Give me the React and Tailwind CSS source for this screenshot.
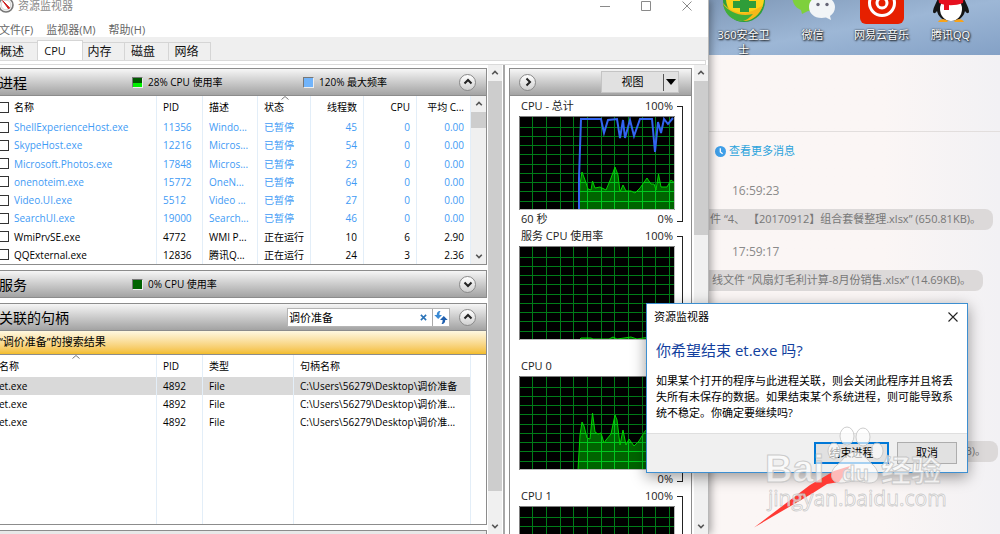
import React from "react";

const PROCESSES = [
  ["ShellExperienceHost.exe", "11356", "Windo...", "已暂停", "45", "0", "0.00"],
  ["SkypeHost.exe", "12216", "Micros...", "已暂停", "54", "0", "0.00"],
  ["Microsoft.Photos.exe", "17848", "Micros...", "已暂停", "29", "0", "0.00"],
  ["onenoteim.exe", "15772", "OneN...", "已暂停", "64", "0", "0.00"],
  ["Video.UI.exe", "5512", "Video ...", "已暂停", "27", "0", "0.00"],
  ["SearchUI.exe", "19000", "Search...", "已暂停", "46", "0", "0.00"],
  ["WmiPrvSE.exe", "4772", "WMI P...", "正在运行", "10", "6", "2.90"],
  ["QQExternal.exe", "12836", "腾讯Q...", "正在运行", "24", "3", "2.36"],
];

const HANDLES = [
  ["et.exe", "4892", "File", "C:\\Users\\56279\\Desktop\\调价准备"],
  ["et.exe", "4892", "File", "C:\\Users\\56279\\Desktop\\调价准..."],
  ["et.exe", "4892", "File", "C:\\Users\\56279\\Desktop\\调价准..."],
];

const GREEN_TOTAL =
  "60,94 61,68 63,56 66,64 69,73 72,74 73.5,65 76,72 81,71 87,74 90,67 92,62 96,51 99,59 101,76 104,69 107,75 112,75 116,77 121,72 128,62 132,68 135,68 137,74 139.5,58 142,71 148,71 152,64 156,67";
const BLUE_TOTAL =
  "60,94 60,62 62,3 82,3 85,17 89,4 98,3 101,22 104,4 106,22 111,4 115,20 121,3 133,3 136,36 139,6 142,17 145,3 149,8 154,2";
const GREEN_CPU0 =
  "59,94 61,59 63,46 65,50 68,62 71,63 73.5,37 76,56 79,58 82,57 85,67 87,64 92,58 96,39 98,44 101,69 104,54 107,69 110,63 115,70 120,65 126,55 134,50 142,56 148,52 156,60";
const GREEN_SERVICE = "60,94 62,92 72,92 74,93 90,93 94,91 98,93 112,91 118,93 130,91 156,93";

function Chevron({ dir, className }) {
  const d = { up: "M1.5 6.5 5 3l3.5 3.5", down: "M1.5 3.5 5 7l3.5-3.5", right: "M3.5 1.5 7 5 3.5 8.5" }[dir];
  return (
    <svg viewBox="0 0 10 10" className={className} fill="none" stroke="currentColor" strokeWidth="2" aria-hidden="true">
      <path d={d} />
    </svg>
  );
}

function RoundButton({ dir, label }) {
  return (
    <button
      type="button"
      aria-label={label}
      className="flex size-[17px] shrink-0 items-center justify-center rounded-full border border-[#8a8a8a] bg-gradient-to-b from-white to-[#d0d0d0] text-[#222]"
    >
      <Chevron dir={dir} className="size-[10px]" />
    </button>
  );
}

function ScrollBar({ thumb, className }) {
  return (
    <div className={"flex flex-col items-center bg-[#f0f0f0] text-[#555] " + className}>
      <Chevron dir="up" className="my-1 size-[8px] shrink-0" />
      <div className={"w-full bg-[#cdcdcd] " + thumb} />
      <Chevron dir="down" className="mt-auto mb-1 size-[8px] shrink-0" />
    </div>
  );
}

function Header({ title, children }) {
  return (
    <div className="flex h-[28px] shrink-0 items-center border-y border-[#8c8c8c] bg-gradient-to-b from-[#f6f6f6] to-[#a3a3a3] pr-[10px] pl-[3px]">
      <h2 className="w-[133px] shrink-0 text-[14px] whitespace-nowrap">{title}</h2>
      {children}
    </div>
  );
}

function Meter({ kind }) {
  const fill = {
    busy: "bg-gradient-to-b from-[#005a00] from-50% to-[#00f000] to-60%",
    idle: "bg-[#006400]",
    freq: "bg-[#71b4fb]",
  }[kind];
  return <span className={"size-[11px] shrink-0 border border-t-[#777] border-l-[#777] border-r-[#eee] border-b-[#eee] " + fill} />;
}

function ProcessTable() {
  const cell = "truncate border-r border-[#e3eef8] px-[6px] py-0 font-normal";
  const checkbox = "-ml-1 size-[11px] shrink-0 appearance-none border border-[#333] bg-white";
  return (
    <table className="h-[168px] w-full min-w-0 table-fixed border-collapse text-[10px] leading-4">
      <colgroup>
        <col />
        <col className="w-[46px]" />
        <col className="w-[55px]" />
        <col className="w-[53px]" />
        <col className="w-[53px]" />
        <col className="w-[53px]" />
        <col className="w-[54px]" />
      </colgroup>
      <thead>
        <tr className="h-[22px] text-left">
          <th className={cell}>
            <label className="flex items-center gap-[5px]">
              <input type="checkbox" className={checkbox} />
              名称
            </label>
          </th>
          <th className={cell}>PID</th>
          <th className={cell}>描述</th>
          <th className={cell + " relative"}>
            状态
            <svg viewBox="0 0 8 4" className="absolute top-0 left-[23px] h-1 w-2" fill="none" stroke="#777" aria-hidden="true">
              <path d="M0.5 3.5 4 .5l3.5 3" />
            </svg>
          </th>
          <th className={cell + " text-right"}>线程数</th>
          <th className={cell + " text-right"}>CPU</th>
          <th className={cell + " text-right"}>平均 C...</th>
        </tr>
      </thead>
      <tbody>
        {PROCESSES.map((p) => (
          <tr key={p[0]} className={p[3] === "已暂停" ? "text-[#3f9bf5]" : "text-black"}>
            <td className={cell}>
              <label className="flex items-center gap-[5px]">
                <input type="checkbox" className={checkbox} />
                {p[0]}
              </label>
            </td>
            <td className={cell}>{p[1]}</td>
            <td className={cell}>{p[2]}</td>
            <td className={cell}>{p[3]}</td>
            <td className={cell + " text-right"}>{p[4]}</td>
            <td className={cell + " text-right"}>{p[5]}</td>
            <td className={cell + " text-right"}>{p[6]}</td>
          </tr>
        ))}
      </tbody>
    </table>
  );
}

function HandleTable() {
  const cell = "truncate border-r border-[#e3eef8] px-[6px] py-0 font-normal";
  return (
    <table className="h-full w-full min-w-0 table-fixed border-collapse text-[10px] leading-4">
      <colgroup>
        <col />
        <col className="w-[46px]" />
        <col className="w-[91px]" />
        <col className="w-[177px]" />
      </colgroup>
      <thead>
        <tr className="h-[22px] text-left">
          <th className={cell + " relative !pl-[3px]"}>
            名称
            <svg viewBox="0 0 8 4" className="absolute top-0 left-[76px] h-1 w-2" fill="none" stroke="#777" aria-hidden="true">
              <path d="M0.5 3.5 4 .5l3.5 3" />
            </svg>
          </th>
          <th className={cell}>PID</th>
          <th className={cell}>类型</th>
          <th className={cell}>句柄名称</th>
        </tr>
      </thead>
      <tbody>
        {HANDLES.map((h, i) => (
          <tr key={i} className={i === 0 ? "h-[18px] bg-[#d9d9d9]" : "h-[18px]"}>
            <td className={cell + " !pl-[3px]"}>{h[0]}</td>
            <td className={cell}>{h[1]}</td>
            <td className={cell}>{h[2]}</td>
            <td className={cell}>{h[3]}</td>
          </tr>
        ))}
        <tr>
          <td className={cell} />
          <td className={cell} />
          <td className={cell} />
          <td className={cell} />
        </tr>
      </tbody>
    </table>
  );
}

const V_LINES = [13, 27, 41, 54, 68, 82, 95, 109, 123, 136, 150];
const H_LINES = [11, 20, 29, 38, 48, 57, 66, 75, 85];

function Graph({ title, green, blue }) {
  const id = "clip-" + title.replace(/\W/g, "") + title.length;
  return (
    <section className="h-[130px] shrink-0 pr-[8px] pl-[9px] text-[#222]">
      <div className="relative">
        <div className="flex h-5 items-center justify-between pr-[10px] pl-[2px] text-[11px]">
          <h3>{title}</h3>
          <span>100%</span>
        </div>
        <svg viewBox="0 0 156 94" preserveAspectRatio="none" className="block h-[94px] w-[calc(100%-8px)]" role="img" aria-label={title}>
          <rect width="156" height="94" fill="#000" />
          <g stroke="#007c18" strokeWidth="1">
            {V_LINES.map((x) => (
              <path key={x} d={`M${x + 0.5} 0V94`} />
            ))}
            {H_LINES.map((y) => (
              <path key={y} d={`M0 ${y + 0.5}H156`} />
            ))}
          </g>
          {green && (
            <g>
              <clipPath id={id}>
                <polygon points={green + " 156,94"} />
              </clipPath>
              <polygon points={green + " 156,94"} fill="#006400" />
              <g clipPath={`url(#${id})`} stroke="#00c81e" strokeWidth="1">
                {V_LINES.map((x) => (
                  <path key={x} d={`M${x + 0.5} 0V94`} />
                ))}
                {H_LINES.map((y) => (
                  <path key={y} d={`M0 ${y + 0.5}H156`} />
                ))}
              </g>
              <polyline points={green} fill="none" stroke="#00d200" strokeWidth="1" />
            </g>
          )}
          {blue && <polyline points={blue} fill="none" stroke="#3264f0" strokeWidth="2" />}
          <path d="M.5 94V.5H156" fill="none" stroke="#808080" />
          <path d="M155.5 1V93.5H1" fill="none" stroke="#bbb" />
        </svg>
        <div className="flex h-4 items-center justify-between pt-[2px] pr-[10px] pl-[2px] text-[11px]">
          <span>{blue ? "60 秒" : ""}</span>
          <span>0%</span>
        </div>
        <span className="absolute top-[10px] right-0 bottom-[4px] w-[6px] border-y border-r border-[#222]" />
      </div>
    </section>
  );
}

function Monitor() {
  return (
    <main className="relative z-10 -ml-1 flex min-h-0 flex-col overflow-hidden border-r border-[#b8b8b8] bg-white text-black shadow-[2px_0_8px_rgba(0,0,0,0.35)]">
      <header className="flex h-3 shrink-0 items-center text-[11px] leading-3 text-[#888]">
        <svg viewBox="0 0 16 16" className="mt-[-3px] mr-1 ml-[2px] size-4 shrink-0" aria-hidden="true">
          <circle cx="8" cy="8" r="7" fill="#f4f4f4" stroke="#777" strokeWidth="1.6" />
          <circle cx="8" cy="8" r="4.8" fill="#fff" stroke="#ccc" strokeWidth=".8" />
          <path d="M4.6 3.6 10.6 12l1-1.2z" fill="#d02020" stroke="#d02020" />
        </svg>
        <h1>资源监视器</h1>
        <div className="mr-[16px] ml-auto flex items-center gap-[31px] text-[#8a8a8a]">
          <button type="button" aria-label="最小化" className="w-[10px]">
            <svg viewBox="0 0 10 10" className="block size-[10px]" stroke="currentColor">
              <path d="M0 5.5h10" />
            </svg>
          </button>
          <button type="button" aria-label="最大化">
            <svg viewBox="0 0 10 10" className="block size-[10px]" fill="none" stroke="currentColor">
              <path d="M.5.5h9v9h-9z" />
            </svg>
          </button>
          <button type="button" aria-label="关闭">
            <svg viewBox="0 0 10 10" className="block size-[10px]" stroke="currentColor">
              <path d="m.5.5 9 9m0-9-9 9" />
            </svg>
          </button>
        </div>
      </header>
      <nav className="flex h-[25px] shrink-0 items-center gap-[13px] pt-[10px] pl-[3px] text-[11px] leading-4 text-[#666]">
        <button type="button">文件(F)</button>
        <button type="button">监视器(M)</button>
        <button type="button">帮助(H)</button>
      </nav>
      <div role="tablist" className="flex h-[23px] shrink-0 items-end bg-[#efefef] text-[12px] text-[#111]">
        <button role="tab" type="button" className="h-[18px] w-[41px] border-t border-[#d5d5d5] pr-[9px] leading-4">概述</button>
        <button role="tab" type="button" aria-selected="true" className="h-[20px] w-[46px] border-x border-t border-[#d5d5d5] bg-white pr-[10px] text-[11px] leading-4">CPU</button>
        <button role="tab" type="button" className="h-[18px] w-[42px] border-t border-r border-[#d5d5d5] pr-[8px] leading-4">内存</button>
        <button role="tab" type="button" className="h-[18px] w-[44px] border-t border-r border-[#d5d5d5] pr-[7px] leading-4">磁盘</button>
        <button role="tab" type="button" className="h-[18px] w-[42px] border-t border-r border-[#d5d5d5] pr-[6px] leading-4">网络</button>
      </div>
      <div className="mr-[2px] h-[5px] shrink-0 border-y border-r border-[#dadada]" />

      <div className="flex min-h-0 flex-1 overflow-hidden">
        <div className="flex min-w-0 flex-1 flex-col overflow-hidden pt-[3px] pr-px">
          <section className="mb-[5px] shrink-0 border-r border-b border-[#8c8c8c]">
            <Header title="进程">
              <div className="flex flex-1 items-center gap-[5px] text-[10px]">
                <Meter kind="busy" />
                <span className="w-[150px]">28% CPU 使用率</span>
                <Meter kind="freq" />
                <span>120% 最大频率</span>
              </div>
              <RoundButton dir="up" label="折叠进程" />
            </Header>
            <div className="flex">
              <ProcessTable />
              <ScrollBar className="w-[15px] shrink-0" thumb="h-4" />
            </div>
          </section>

          <section className="mb-[5px] shrink-0 border-r border-[#8c8c8c]">
            <Header title="服务">
              <div className="flex flex-1 items-center gap-[5px] text-[10px]">
                <Meter kind="idle" />
                <span>0% CPU 使用率</span>
              </div>
              <RoundButton dir="down" label="展开服务" />
            </Header>
          </section>

          <section className="mb-[5px] flex min-h-0 flex-1 flex-col border-r border-b border-[#8c8c8c]">
            <Header title="关联的句柄">
              <form className="mr-[9px] ml-auto flex h-[19px] w-[163px] items-center border border-[#b5b5b5] bg-white text-[#2a73b8]">
                <input
                  type="text"
                  aria-label="搜索句柄"
                  defaultValue="调价准备"
                  className="h-full min-w-0 flex-1 bg-white pl-px text-[11px] text-black outline-none"
                />
                <button type="button" aria-label="清除" className="px-[5px]">
                  <svg viewBox="0 0 8 8" className="size-[7px]" stroke="currentColor" strokeWidth="1.8">
                    <path d="m1 1 6 6m0-6L1 7" />
                  </svg>
                </button>
                <button type="button" aria-label="刷新" className="h-full border-l border-[#aaa] px-px">
                  <svg viewBox="0 0 14 14" className="size-[14px]">
                    <path d="M6.500 1C3.500 1 2.800 3 2.800 5H.3l3.900 4L8 5H5.400c0-1.500.1-2.700 1.100-4z" fill="#3a8ad4" />
                    <path d="M7.500 14c3 0 3.700-2 3.700-4h2.500L9.800 6 6 10h2.600c0 1.500-.1 2.700-1.100 4z" fill="#1f5fae" />
                  </svg>
                </button>
              </form>
              <RoundButton dir="up" label="折叠关联的句柄" />
            </Header>
            <div className="flex h-[24px] shrink-0 items-center border-b border-[#8c8c8c] bg-gradient-to-b from-[#fff8e0] to-[#f3bd27] pl-[3px] text-[11px]">
              “调价准备”的搜索结果
            </div>
            <div className="flex min-h-0 flex-1 pr-[15px]">
              <HandleTable />
            </div>
          </section>
          <div className="h-[4px] shrink-0 border-t border-r border-[#8c8c8c] bg-[#e8e8e8]" />
        </div>
        <ScrollBar className="w-[14px] shrink-0" thumb="h-[410px] shrink" />
        <div className="mr-1 ml-px w-[2px] shrink-0 bg-[#a8a8a8]" />
        <aside className="mt-[3px] flex w-[183px] shrink-0 flex-col overflow-hidden border-x border-[#8c8c8c]">
          <div className="flex h-[28px] shrink-0 items-center justify-between border-y border-[#8c8c8c] bg-gradient-to-b from-[#f6f6f6] to-[#a3a3a3] pr-[12px] pl-[9px]">
            <RoundButton dir="right" label="收起图表" />
            <button type="button" className="flex h-[22px] w-[78px] items-center border border-[#c4c4c4] bg-[#e1e1e1] text-[11px]">
              <span className="flex-1 text-center">视图</span>
              <span className="flex h-[17px] w-[15px] items-center justify-center border-l border-[#555]">
                <svg viewBox="0 0 10 6" className="h-[6px] w-[10px]">
                  <path d="M0 0h10L5 6z" fill="#000" />
                </svg>
              </span>
            </button>
          </div>
          <Graph title="CPU - 总计" green={GREEN_TOTAL} blue={BLUE_TOTAL} />
          <Graph title="服务 CPU 使用率" green={GREEN_SERVICE} />
          <Graph title="CPU 0" green={GREEN_CPU0} />
          <Graph title="CPU 1" />
        </aside>
        <ScrollBar className="ml-[2px] w-[14px] shrink-0" thumb="h-[154px]" />
      </div>
    </main>
  );
}

function DesktopIcon({ name, children }) {
  return (
    <a href="#" className="flex w-[69px] flex-col items-center text-center text-[11px] leading-[15px] text-white [text-shadow:1px_1px_2px_#000,0_0_2px_#222]">
      <svg viewBox="0 0 48 26" className="mb-px h-[26px] w-[48px] shrink-0" aria-hidden="true">
        {children}
      </svg>
      <span className="w-[56px] break-all whitespace-normal">{name}</span>
    </a>
  );
}

function Desktop() {
  return (
    <div className="flex h-[55px] shrink-0 overflow-hidden bg-gradient-to-br from-[#8099b8] via-[#9db7d6] to-[#84a1c6]">
      <DesktopIcon name="360安全卫士">
        <circle cx="24" cy="1" r="21" fill="#2f9e3c" />
        <circle cx="25" cy="-1" r="19" fill="#fbd21a" />
        <path d="M3 3c8 10 22 15 40 2-3 10-11 16-19 16C13 21 5 14 3 3z" fill="#f6b818" />
        <path d="M3 4c7 9 18 13 30 10-4 4-6 6-10 7C13 21 5 15 3 4z" fill="#3fae3a" />
        <path d="M20-4h9v5h7v7h-7v4h-9V8h-7V1h7z" fill="#2f9d39" />
      </DesktopIcon>
      <DesktopIcon name="微信">
        <path d="M3-6h30v14c-3 3-9 4-14 3l-6 3-1-4C7 8 3 4 3-6z" fill="#7ed03c" />
        <path d="M20 7C20 0 26-4 33-4S46 1 46 7c0 4-2 7-5 9l1 4-5-2.500c-10 2-17-3-17-10.500z" fill="#f2f5f7" />
        <circle cx="29" cy="4.500" r="1.700" fill="#667" />
        <circle cx="38" cy="4.500" r="1.700" fill="#667" />
      </DesktopIcon>
      <DesktopIcon name="网易云音乐">
        <rect x="2" y="-20" width="44" height="44" rx="6" fill="#e62000" />
        <circle cx="24" cy="3" r="12.500" fill="none" stroke="#fff" strokeWidth="3" />
        <circle cx="24" cy="3" r="5" fill="none" stroke="#fff" strokeWidth="3" />
      </DesktopIcon>
      <DesktopIcon name="腾讯QQ">
        <path d="M12-6h24c1 7 5 11 6 17 0 3-2 3-4 0-1 5-5 10-14 10S11 16 10 11c-2 3-4 3-4 0 1-6 5-10 6-17z" fill="#151515" />
        <ellipse cx="24" cy="9" rx="11" ry="12" fill="#fff" />
        <path d="M11-4h26l-1 7c-8 3-17 3-24 0z" fill="#e60f1e" />
        <path d="M17 2h5v8h-5z" fill="#e60f1e" />
        <path d="M11 22c1-3 6-4 10-1l-1 1zM37 22c-1-3-6-4-10-1l1 1z" fill="#f8a31a" />
      </DesktopIcon>
    </div>
  );
}

function Chat() {
  const bubble = "flex h-[21px] shrink-0 items-center justify-end self-stretch overflow-hidden rounded-r-[8px] bg-[#dcd9d9] pr-3 text-[11px] whitespace-pre text-[#777]";
  return (
    <div className="flex flex-1 flex-col bg-gradient-to-r from-[#fbf6f5] from-60% to-[#f2f1f4] text-[#8a8a8a]">
      <div className="h-[77px] shrink-0 border-b border-[#e2dedd]" />
      <a href="#" className="mt-[9px] ml-[6px] flex h-5 shrink-0 items-center gap-[3px] text-[11px] text-[#2ba3dc]">
        <svg viewBox="0 0 12 12" className="size-[11px]" aria-hidden="true">
          <circle cx="6" cy="6" r="6" fill="#409fe8" />
          <path d="M5.800 2.500v4l2.500 2" fill="none" stroke="#fff" strokeWidth="1.400" />
        </svg>
        查看更多消息
      </a>
      <time className="mt-5 ml-[23px] h-5 shrink-0 text-[12px] leading-5">16:59:23</time>
      <p className={bubble + " mt-2 mr-[7px]"}>{"件 “4、 【20170912】组合套餐整理.xlsx” (650.81KB)。"}</p>
      <time className="mt-3 ml-[23px] h-5 shrink-0 text-[12px] leading-5">17:59:17</time>
      <p className={bubble + " mt-2 mr-[17px]"}>{"线文件 “风扇灯毛利计算-8月份销售.xlsx” (14.69KB)。"}</p>
      <p className={bubble + " mt-[150px] mr-[2px]"}>B)。</p>
    </div>
  );
}

function ConfirmDialog() {
  return (
    <div
      role="dialog"
      aria-labelledby="dialog-title"
      className="absolute top-[303px] left-[646px] z-20 flex w-[322px] flex-col border border-[#3d8fd1] bg-white text-black shadow-[0_4px_14px_rgba(0,0,0,0.4)]"
    >
      <div className="flex h-[26px] items-center justify-between pr-[9px] pl-[7px] text-[11px]">
        <span>资源监视器</span>
        <button type="button" aria-label="关闭">
          <svg viewBox="0 0 10 10" className="size-[10px]" stroke="#222" strokeWidth="1.100">
            <path d="m.5.5 9 9m0-9-9 9" />
          </svg>
        </button>
      </div>
      <h2 id="dialog-title" className="mt-[10px] pl-[9px] text-[15px] leading-5 text-[#123f9e]">
        你希望结束 et.exe 吗?
      </h2>
      <p className="mt-[13px] mb-[13px] h-[47px] pr-3 pl-[9px] text-[11px] leading-4">
        如果某个打开的程序与此进程关联，则会关闭此程序并且将丢失所有未保存的数据。如果结束某个系统进程，则可能导致系统不稳定。你确定要继续吗?
      </p>
      <div className="flex h-[39px] items-center justify-end gap-2 border-t border-[#dfdfdf] bg-[#f0f0f0] pr-[10px] text-[11px]">
        <button type="button" className="h-[22px] w-[75px] border-2 border-[#0078d7] bg-[#e1e1e1] leading-4">结束进程</button>
        <button type="button" className="h-[22px] w-[60px] border border-[#adadad] bg-[#e1e1e1] leading-4">取消</button>
      </div>
    </div>
  );
}

function Watermark() {
  return (
    <div className="pointer-events-none absolute top-[424px] left-[750px] z-30">
      <svg viewBox="0 0 210 108" className="block h-[108px] w-[210px]">
        <path d="M4 103.500 60 61 84 47l16-5-11 16-12 2-14 9z" fill="#ff3a34" />
        <g fill="#fff" fillOpacity=".65" stroke="#c0c0c0" strokeOpacity=".8" strokeWidth="1">
          <ellipse cx="97" cy="12" rx="7" ry="9" />
          <ellipse cx="113" cy="13" rx="7" ry="9" />
          <ellipse cx="84" cy="27" rx="6" ry="8" />
          <ellipse cx="127" cy="27" rx="6" ry="8" />
          <path d="M105 28c9 0 12 8 18 13s9 18-4 18c-5 0-9-2-14-2s-9 2-14 2c-13 0-11-13-4-18s9-13 18-13z" />
          <g fontFamily="Liberation Sans, Noto Sans CJK SC, sans-serif" fontWeight="700">
            <text x="15" y="58" fontSize="38">Bai</text>
            <text x="92" y="57" fontSize="22">du</text>
            <text x="131" y="57" fontSize="30">经验</text>
          </g>
          <text x="18" y="82" fontSize="21" fontFamily="Open Sans, Noto Sans, sans-serif" strokeWidth=".8">
            jingyan.baidu.com
          </text>
        </g>
      </svg>
    </div>
  );
}

export default function App() {
  return (
    <div className="relative grid h-screen grid-cols-[minmax(0,709fr)_minmax(0,291fr)] overflow-hidden font-['Open_Sans','Noto_Sans_CJK_SC',sans-serif]">
      <Monitor />
      <div className="flex min-w-0 flex-col overflow-hidden">
        <Desktop />
        <Chat />
      </div>
      <ConfirmDialog />
      <Watermark />
    </div>
  );
}
